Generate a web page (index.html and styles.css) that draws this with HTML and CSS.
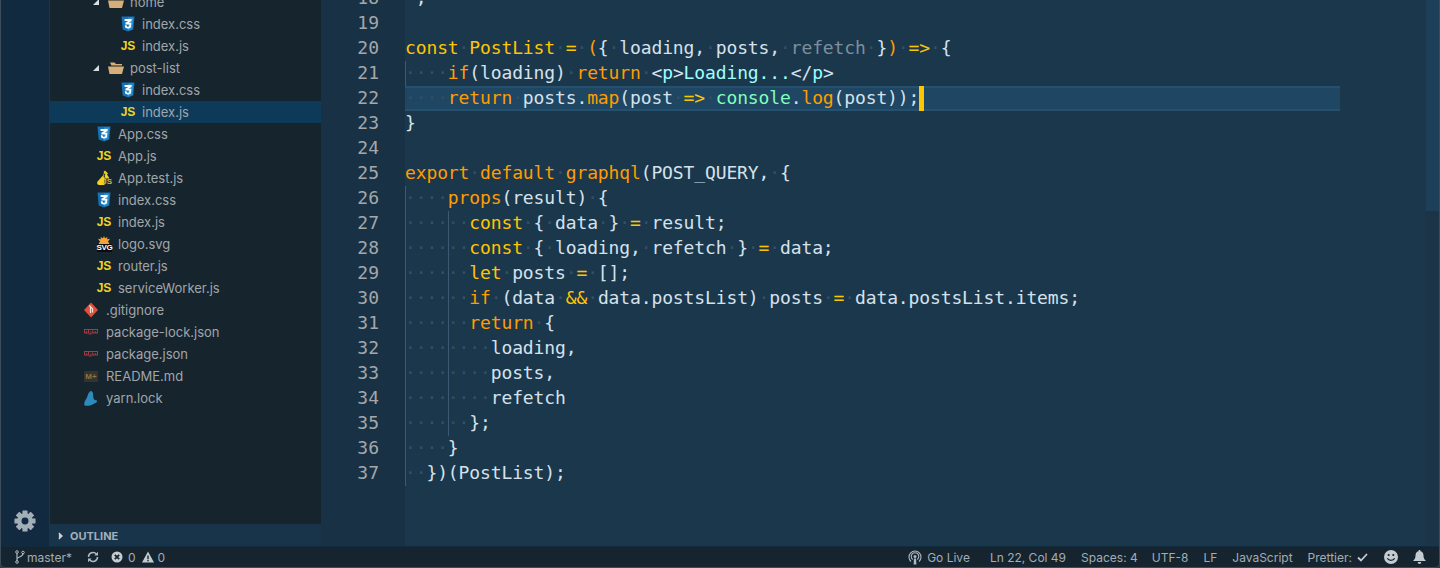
FILE: index.html
```html
<!DOCTYPE html>
<html lang="en">
<head>
<meta charset="utf-8">
<title>index.js - VS Code</title>
<link rel="stylesheet" href="styles.css">
</head>
<body>
<div class="window">
  <div class="workbench">
    <aside class="activity">
      <svg class="gear" viewBox="0 0 24 24" width="22" height="22"><g fill="#a3afb8"><rect x="9.200" y="0.500" width="5.600" height="23" rx=".6"/><rect x="9.200" y="0.500" width="5.600" height="23" rx=".6" transform="rotate(45 12 12)"/><rect x="9.200" y="0.500" width="5.600" height="23" rx=".6" transform="rotate(90 12 12)"/><rect x="9.200" y="0.500" width="5.600" height="23" rx=".6" transform="rotate(135 12 12)"/><circle cx="12" cy="12" r="8.500"/></g><circle cx="12" cy="12" r="3.800" fill="#122a3f"/></svg>
    </aside>
    <nav class="sidebar">
      <div class="tree">
        <div class="row folder"><svg class="arrow" viewBox="0 0 6 6"><path d="M6 0v6H0z"/></svg><svg class="ico" viewBox="0 0 16 16"><path class="fold" d="M2 2.500h4.500l1.500 1.500h6v1.500H3.500zM0 6.500h16L14 14H1.500z"/></svg><span>home</span></div>
        <div class="row l2"><svg class="ico" viewBox="0 0 16 16"><path class="cssa" d="M1.500 .5h13l-1.200 13L8 15.500l-5.300-2z"/><path class="cssb" d="M8 1.500v13l4.300-1.500 1.100-11.500z"/><path class="cssc" d="M4.500 3h7.200l-.2 2-3 1.700h2.900l-.5 4.800L8 12.800l-2.900-1.200-.2-2.300h1.800l.1 1.100 1.200.4 1.200-.4.200-2H5.400V6.700l2.800-1.600H4.700z"/></svg><span>index.css</span></div>
        <div class="row l2"><span class="ico js">JS</span><span>index.js</span></div>
        <div class="row folder"><svg class="arrow" viewBox="0 0 6 6"><path d="M6 0v6H0z"/></svg><svg class="ico" viewBox="0 0 16 16"><path class="fold" d="M2 2.500h4.500l1.500 1.500h6v1.500H3.500zM0 6.500h16L14 14H1.500z"/></svg><span>post-list</span></div>
        <div class="row l2"><svg class="ico" viewBox="0 0 16 16"><path class="cssa" d="M1.500 .5h13l-1.200 13L8 15.500l-5.300-2z"/><path class="cssb" d="M8 1.500v13l4.300-1.500 1.100-11.500z"/><path class="cssc" d="M4.500 3h7.200l-.2 2-3 1.700h2.900l-.5 4.800L8 12.800l-2.900-1.200-.2-2.300h1.800l.1 1.100 1.200.4 1.200-.4.200-2H5.400V6.700l2.800-1.600H4.700z"/></svg><span>index.css</span></div>
        <div class="row l2 selected"><span class="ico js">JS</span><span>index.js</span></div>
        <div class="row l1"><svg class="ico" viewBox="0 0 16 16"><path class="cssa" d="M1.500 .5h13l-1.200 13L8 15.500l-5.300-2z"/><path class="cssb" d="M8 1.500v13l4.300-1.500 1.100-11.500z"/><path class="cssc" d="M4.500 3h7.200l-.2 2-3 1.700h2.900l-.5 4.800L8 12.800l-2.900-1.200-.2-2.300h1.800l.1 1.100 1.200.4 1.200-.4.200-2H5.400V6.700l2.800-1.600H4.700z"/></svg><span>App.css</span></div>
        <div class="row l1"><span class="ico js">JS</span><span>App.js</span></div>
        <div class="row l1"><span class="ico testjs"><svg viewBox="0 0 16 16"><path fill="#f2d41c" d="M9 .5L12 3.500l-1 1 2.500 4H8.500V15H3.500C1 15 .5 12.500 2 11L7 5.500 8 3 7.500 2z"/><path fill="#18252e" d="M8.500 3.500l1 .3-1 2.200 1 1.500H8L7.500 6z"/></svg><b>JS</b></span><span>App.test.js</span></div>
        <div class="row l1"><svg class="ico" viewBox="0 0 16 16"><path class="cssa" d="M1.500 .5h13l-1.200 13L8 15.500l-5.300-2z"/><path class="cssb" d="M8 1.500v13l4.300-1.500 1.100-11.500z"/><path class="cssc" d="M4.500 3h7.200l-.2 2-3 1.700h2.900l-.5 4.800L8 12.800l-2.900-1.200-.2-2.300h1.800l.1 1.100 1.200.4 1.200-.4.200-2H5.400V6.700l2.800-1.600H4.700z"/></svg><span>index.css</span></div>
        <div class="row l1"><span class="ico js">JS</span><span>index.js</span></div>
        <div class="row l1"><span class="ico svgico"><svg viewBox="0 0 14 8"><path fill="#f2a33a" d="M7 0l1 2.300L10.500 1 10 3.200l3-.4-2 2.700 1.500 2.500h-11L3 5.500 1 2.800l3 .4L3.500 1 6 2.300z"/></svg><b>SVG</b></span><span>logo.svg</span></div>
        <div class="row l1"><span class="ico js">JS</span><span>router.js</span></div>
        <div class="row l1"><span class="ico js">JS</span><span>serviceWorker.js</span></div>
        <div class="row l0"><svg class="ico" viewBox="0 0 16 16"><path fill="#e2503a" d="M7 .5L14 8l-7 7.500L0 8z"/><path fill="none" stroke="#f3e3dc" stroke-width="1.200" d="M5.300 3.500l3.200 3.200v3.800M6.500 4.700v6.300"/></svg><span>.gitignore</span></div>
        <div class="row l0"><svg class="ico" viewBox="0 0 16 16"><path fill="#a23c40" d="M0 5h14v4.500H7.200v1H4.800v-1H0z"/><path fill="#18252e" d="M1 6h3v2.500H3V7H2v1.500H1zM5 6h3v2.500H6.200v1H5zM6.200 7V7.700H7V7zM8.700 6h4.300v2.500h-1V7h-.7v1.500h-1V7h-.7v1.500h-1z"/></svg><span>package-lock.json</span></div>
        <div class="row l0"><svg class="ico" viewBox="0 0 16 16"><path fill="#a23c40" d="M0 5h14v4.500H7.200v1H4.800v-1H0z"/><path fill="#18252e" d="M1 6h3v2.500H3V7H2v1.500H1zM5 6h3v2.500H6.200v1H5zM6.200 7V7.700H7V7zM8.700 6h4.300v2.500h-1V7h-.7v1.500h-1V7h-.7v1.500h-1z"/></svg><span>package.json</span></div>
        <div class="row l0"><span class="ico md">M+</span><span>README.md</span></div>
        <div class="row l0"><svg class="ico" viewBox="0 0 16 16"><path fill="#2b8cbc" d="M6.500 1c1.500.2 2.300 1.200 2.500 2.500.3 2 .1 3.800.7 5.300.5 1.200 1.800 1.500 3.300 1.700.3 1-.5 2-2 2.700-1.500.7-3 1.800-5 2.300-1.500.4-4 .5-5.200 0C-.2 14.500.3 12 1.500 10c1-1.500 1.800-3 2.200-4.500C4.100 4 5 2 6.500 1z"/></svg><span>yarn.lock</span></div>
      </div>
      <div class="outline"><svg class="chev" viewBox="0 0 6 10"><path fill="none" stroke="#c9d1d6" stroke-width="1.500" d="M1 1l4 4-4 4"/><path fill="#c9d1d6" d="M1 1l4 4-4 4z"/></svg><span>OUTLINE</span></div>
    </nav>
    <main class="editor">
      <div class="gutter">
        <div class="scroll">
          <div class="num">18</div><div class="num">19</div><div class="num">20</div><div class="num">21</div><div class="num">22</div><div class="num">23</div><div class="num">24</div><div class="num">25</div><div class="num">26</div><div class="num">27</div><div class="num">28</div><div class="num">29</div><div class="num">30</div><div class="num">31</div><div class="num">32</div><div class="num">33</div><div class="num">34</div><div class="num">35</div><div class="num">36</div><div class="num">37</div>
        </div>
      </div>
      <div class="code">
        <div class="scroll">
          <div class="ln">`;</div>
          <div class="ln"></div>
          <div class="ln"><i class="y">const</i><u>·</u><i class="y">PostList</i><u>·</u><i class="y">=</i><u>·</u><i class="o">(</i>{<u>·</u>loading,<u>·</u>posts,<u>·</u><i class="d">refetch</i><u>·</u>}<i class="o">)</i><u>·</u><i class="y">=&gt;</i><u>·</u>{</div>
          <div class="guide">
            <div class="ln"><u>····</u><i class="o">if</i>(loading)<u>·</u><i class="o">return</i><u>·</u>&lt;<i class="c">p</i>&gt;<i class="c">Loading...</i>&lt;/<i class="c">p</i>&gt;</div>
            <div class="ln active"><u>····</u><i class="o">return</i><u>·</u>posts.<i class="o">map</i>(post<u>·</u><i class="y">=&gt;</i><u>·</u><i class="g">console</i>.<i class="o">log</i>(post));<span class="cursor"></span></div>
          </div>
          <div class="ln">}</div>
          <div class="ln"></div>
          <div class="ln"><i class="o">export</i><u>·</u><i class="o">default</i><u>·</u><i class="o">graphql</i>(POST_QUERY,<u>·</u>{</div>
          <div class="guide">
            <div class="ln"><u>····</u><i class="o">props</i>(result)<u>·</u>{</div>
            <div class="guide two">
              <div class="ln"><u>······</u><i class="y">const</i><u>·</u>{<u>·</u>data<u>·</u>}<u>·</u><i class="y">=</i><u>·</u>result;</div>
              <div class="ln"><u>······</u><i class="y">const</i><u>·</u>{<u>·</u>loading,<u>·</u>refetch<u>·</u>}<u>·</u><i class="y">=</i><u>·</u>data;</div>
              <div class="ln"><u>······</u><i class="y">let</i><u>·</u>posts<u>·</u><i class="y">=</i><u>·</u>[];</div>
              <div class="ln"><u>······</u><i class="o">if</i><u>·</u>(data<u>·</u><i class="y">&amp;&amp;</i><u>·</u>data.postsList)<u>·</u>posts<u>·</u><i class="y">=</i><u>·</u>data.postsList.items;</div>
              <div class="ln"><u>······</u><i class="o">return</i><u>·</u>{</div>
              <div class="ln"><u>········</u>loading,</div>
              <div class="ln"><u>········</u>posts,</div>
              <div class="ln"><u>········</u>refetch</div>
              <div class="ln"><u>······</u>};</div>
            </div>
            <div class="ln"><u>····</u>}</div>
            <div class="ln"><u>··</u>})(PostList);</div>
          </div>
        </div>
      </div>
      <div class="margin"></div>
      <div class="scrollbar"><div class="slider"></div></div>
    </main>
  </div>
  <footer class="status">
    <div class="left">
      <span class="item"><svg width="10" height="14" viewBox="0 0 10 14"><path fill="none" stroke="#aeb8bf" stroke-width="1.200" d="M2 3v8M2 9c0-2.500 6-1.500 6-5.500"/><circle cx="2" cy="2" r="1.300" fill="none" stroke="#aeb8bf"/><circle cx="8" cy="2.500" r="1.300" fill="none" stroke="#aeb8bf"/><circle cx="2" cy="12" r="1.300" fill="none" stroke="#aeb8bf"/></svg>master*</span>
      <span class="item sync"><svg width="12" height="12" viewBox="0 0 12 12"><path fill="none" stroke="#aeb8bf" stroke-width="1.500" d="M1.500 6a4.500 4.500 0 0 1 8-2.800M10.500 6a4.500 4.500 0 0 1-8 2.800"/><path fill="#aeb8bf" d="M11 .8v3.700H7.300zM1 11.200V7.500h3.700z"/></svg></span>
      <span class="item probs"><svg width="12" height="12" viewBox="0 0 12 12"><circle cx="6" cy="6" r="5.500" fill="#c4ccd1"/><path stroke="#15242e" stroke-width="1.800" d="M3.800 3.800l4.400 4.400M8.200 3.800L3.800 8.200"/></svg>0<svg class="warn" width="12" height="12" viewBox="0 0 12 12"><path fill="#c4ccd1" d="M6 .5L12 11.500H0z"/><path fill="#15242e" d="M5.300 4.500h1.400v3.800H5.300zM5.300 9h1.400v1.300H5.300z"/></svg>0</span>
    </div>
    <div class="right">
      <span class="item live"><svg width="14" height="15" viewBox="0 0 14 15"><g fill="none" stroke="#aeb8bf" stroke-width="1.100"><path d="M3 11.500a6 6 0 1 1 8 0"/><path d="M4.700 9.500a3.800 3.800 0 1 1 4.600 0"/></g><circle cx="7" cy="6.500" r="1.500" fill="#aeb8bf"/><path fill="#aeb8bf" d="M6 8.500h2l.4 6H5.600z"/></svg>Go Live</span>
      <span class="item">Ln 22, Col 49</span>
      <span class="item spaces">Spaces: 4</span>
      <span class="item">UTF-8</span>
      <span class="item">LF</span>
      <span class="item">JavaScript</span>
      <span class="item pret">Prettier: <svg width="11" height="9" viewBox="0 0 11 9"><path fill="none" stroke="#c4ccd1" stroke-width="1.800" d="M1 4.500l3 3 6-6.500"/></svg></span>
      <span class="item smile"><svg width="14" height="14" viewBox="0 0 14 14"><circle cx="7" cy="7" r="7" fill="#c4ccd1"/><circle cx="4.700" cy="5" r="1.100" fill="#15242e"/><circle cx="9.300" cy="5" r="1.100" fill="#15242e"/><path fill="none" stroke="#15242e" stroke-width="1.200" d="M3.300 8.300c1.500 2.800 5.900 2.800 7.400 0"/></svg></span>
      <span class="item bell"><svg width="13" height="14" viewBox="0 0 13 14"><path fill="#c4ccd1" d="M6.500 0c.8 0 1 .6 1 1.200 2 .5 3 2.200 3 4.300 0 2.500.7 3.800 2.500 5.500H0c1.800-1.700 2.500-3 2.500-5.500 0-2.100 1-3.800 3-4.300 0-.6.200-1.200 1-1.200zM4.800 12h3.400c0 1.200-.7 2-1.700 2s-1.700-.8-1.700-2z"/></svg></span>
    </div>
  </footer>
</div>
</body>
</html>
```
FILE: styles.css
```css
* { box-sizing: border-box; }
html, body { margin: 0; height: 100%; background: #2b3c4a; overflow: hidden; }
.window {
  height: 568px;
  display: flex;
  flex-direction: column;
  border: 1px solid #3d4c58;
  border-top: 0;
  border-radius: 0 0 5px 5px;
  overflow: hidden;
  font-family: "Inter", "Liberation Sans", sans-serif;
}
.workbench { flex: 1; min-height: 0; display: flex; }
.activity {
  width: 49px;
  flex: none;
  background: #122a3f;
  border-right: 1px solid #193650;
  display: flex;
  flex-direction: column;
  justify-content: flex-end;
  align-items: center;
  padding-bottom: 14px;
}
.gear { display: block; }
.sidebar {
  width: 272px;
  flex: none;
  background: #16242e;
  display: flex;
  flex-direction: column;
  border-right: 1px solid #193045;
}
.tree { flex: 1; min-height: 0; overflow: hidden; }
.tree .row:first-child { margin-top: -9px; }
.row {
  height: 22px;
  display: flex;
  align-items: center;
  font-size: 13px;
  color: #a0a6aa;
  white-space: nowrap;
}
.l0 { padding-left: 34px; }
.l1 { padding-left: 46px; }
.l2 { padding-left: 70px; }
.folder { padding-left: 43px; }
.selected { background: #0e3a5a; }
.arrow { width: 6px; height: 6px; flex: none; margin-right: 9px; fill: #d7dde0; }
.ico {
  width: 16px;
  height: 16px;
  flex: none;
  margin-right: 6px;
  display: flex;
  align-items: center;
  justify-content: center;
}
.fold { fill: #d6ae79; }
.cssa { fill: #1572b6; }
.cssb { fill: #2a8fd0; }
.cssc { fill: #fff; }
.js {
  font: bold 12px/16px "Liberation Sans", sans-serif;
  color: #f0d41e;
}
.testjs { position: relative; }
.testjs svg { width: 16px; height: 16px; }
.testjs b {
  position: absolute;
  right: 0;
  bottom: 0;
  font: bold 8px/8px "Liberation Sans", sans-serif;
  color: #d9bd17;
}
.svgico { flex-direction: column; justify-content: flex-start; }
.svgico svg { width: 14px; height: 8px; display: block; }
.svgico b {
  display: block;
  width: 15px;
  background: #0b0b0b;
  color: #fff;
  font: bold 8px/8px "Liberation Sans", sans-serif;
  letter-spacing: -0.3px;
  text-align: center;
}
.md {
  width: 14px;
  height: 11px;
  margin-right: 8px;
  background: #34332f;
  color: #8f7444;
  font: bold 8px/11px "Liberation Sans", sans-serif;
}
.outline {
  height: 22px;
  flex: none;
  background: #18344a;
  display: flex;
  align-items: center;
  padding: 2px 0 0 8px;
  font-size: 11px;
  font-weight: 700;
  color: #a3afb8;
}
.chev { width: 5px; height: 8px; margin-right: 7px; }
.editor { flex: 1; min-width: 0; display: flex; background: #1b374c; overflow: hidden; }
.gutter {
  width: 83px;
  flex: none;
  background: #193145;
  overflow: hidden;
}
.code { width: 935px; flex: none; overflow: hidden; }
.scroll {
  margin-top: -14px;
  font: 18px/23px "DejaVu Sans Mono", monospace;
}
.num { height: 25px; padding-right: 26px; text-align: right; color: #a4a8a9; }
.ln {
  height: 25px;
  color: #d5e2ec;
  display: flex;
  white-space: pre;
  letter-spacing: -0.125px;
}
.ln u { text-decoration: none; color: #305169; }
.ln i { font-style: normal; }
.y { color: #ffc600; }
.o { color: #ff9d00; }
.d { color: #7d8f9d; }
.c { color: #9effff; }
.g { color: #80ffbb; }
.active { background: #1f4662; box-shadow: inset 0 2px 0 #25506e, inset 0 -2px 0 #25506e; }
.cursor { width: 5px; height: 25px; background: #ffc600; flex: none; }
.guide { background: linear-gradient(#3a5a72, #3a5a72) 0 0 / 1px 100% no-repeat; }
.guide.two { background-position: 43px 0; }
.margin { flex: 1; }
.scrollbar { width: 13px; flex: none; background: #1b3448; }
.slider { height: 211px; background: #1e3f58; }
.status {
  height: 21px;
  flex: none;
  background: #15242e;
  border-top: 1px solid #102a3e;
  display: flex;
  justify-content: space-between;
  align-items: center;
  font-size: 12px;
  color: #a3adb4;
  padding: 0 13px 0 14px;
}
.left, .right { display: flex; align-items: center; }
.right { gap: 15px; }
.item { display: flex; align-items: center; white-space: nowrap; }
.item svg { flex: none; }
.left .item:first-child svg { margin-right: 2px; }
.sync { margin-left: 15px; }
.probs { margin-left: 12px; }
.probs svg { margin-right: 5px; }
.warn { margin-left: 6px; margin-right: 4px !important; }
.live { margin-right: 5px; }
.live svg { margin-right: 5px; }
.spaces { margin-right: -1px; }
.pret svg { margin-left: 5px; }
.smile { margin-left: 1px; }
```
